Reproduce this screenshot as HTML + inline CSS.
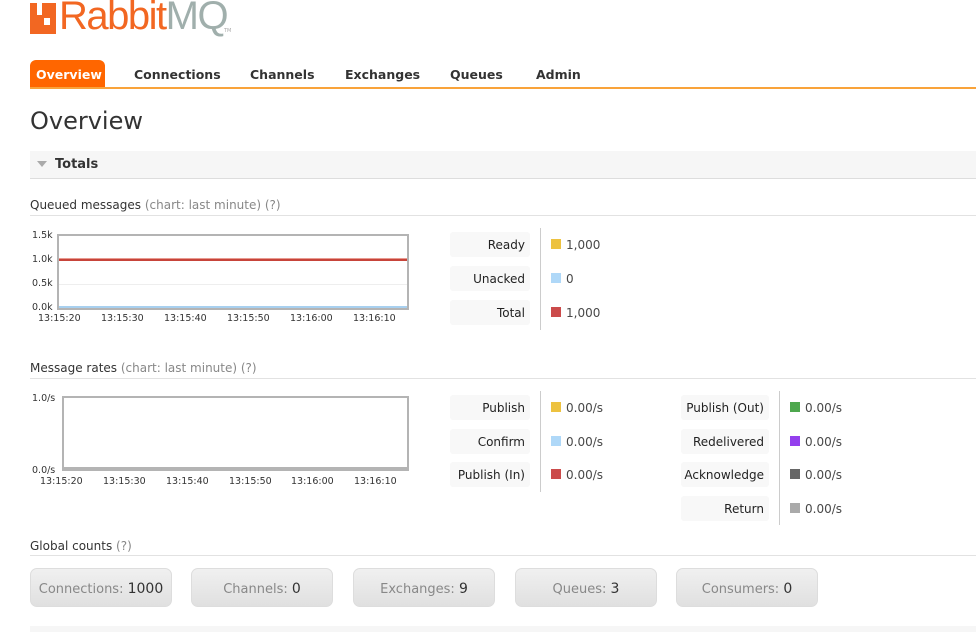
<!DOCTYPE html>
<html><head><style>
*{margin:0;padding:0;box-sizing:border-box}
body{width:976px;height:632px;overflow:hidden;background:#fff;font-family:Verdana,"DejaVu Sans","Liberation Sans",sans-serif;color:#484848;position:relative;font-size:12px}
.a{position:absolute}
.nav{font-weight:bold;font-size:12.5px;color:#333;top:66px}
.lb{position:absolute;width:80px;height:25px;background:#f8f8f8;border-radius:3px;text-align:right;padding-right:5px;line-height:26px;font-size:12px;color:#222}
.sw{position:absolute;width:10px;height:10px}
.v{position:absolute;font-size:12px;color:#484848}
.btn{position:absolute;top:568px;width:142px;height:39px;border-radius:7px;background:linear-gradient(#f0f0f0,#e0e0e0);border:1px solid #ddd;text-align:center;line-height:41px;color:#888;font-size:13px}
.btn b{font-weight:normal;color:#333;font-size:14px}
.hd{font-size:12px;color:#333}
.hd span{color:#888}
.ax{position:absolute;font-size:9.5px;color:#333}
</style></head><body>
<div class="a" style="left:30px;top:3px;width:26px;height:31px;background:#f26722"></div>
<div class="a" style="left:37px;top:3px;width:5px;height:12px;background:#fff"></div>
<div class="a" style="left:44px;top:18px;width:6px;height:7px;background:#fff"></div>
<div class="a" style="left:59px;top:-6px;font-family:'Liberation Sans',sans-serif;font-size:40px;letter-spacing:-1.5px;color:#f26722">Rabbit<span style="color:#a0afac">MQ</span></div>
<div class="a" style="left:224px;top:28px;font-size:5px;color:#aaa">TM</div>
<div class="a" style="left:30px;top:60px;width:75px;height:28px;background:#f60;border-radius:6px 6px 0 0"></div>
<div class="a nav" style="left:36px;color:#fff;top:67px">Overview</div>
<div class="a nav" style="left:134px;top:67px">Connections</div>
<div class="a nav" style="left:250px;top:67px">Channels</div>
<div class="a nav" style="left:345px;top:67px">Exchanges</div>
<div class="a nav" style="left:450px;top:67px">Queues</div>
<div class="a nav" style="left:536px;top:67px">Admin</div>
<div class="a" style="left:30px;top:87px;width:946px;height:2px;background:#f9a33a"></div>
<div class="a" style="left:30px;top:107px;font-size:24px;color:#333">Overview</div>
<div class="a" style="left:30px;top:151px;width:946px;height:28px;background:#f6f6f6;border-bottom:1px solid #ddd"></div>
<div class="a" style="left:37px;top:161px;width:0;height:0;border-left:5px solid transparent;border-right:5px solid transparent;border-top:6px solid #aaa"></div>
<div class="a" style="left:55px;top:157px;font-weight:bold;font-size:13px;color:#333">Totals</div>
<div class="a hd" style="left:30px;top:198px">Queued messages <span>(chart: last minute) (?)</span></div>
<div class="a" style="left:30px;top:215px;width:946px;height:1px;background:#e2e2e2"></div>
<div class="ax" style="left:32px;top:230px">1.5k</div><div class="ax" style="left:32px;top:254px">1.0k</div><div class="ax" style="left:32px;top:278px">0.5k</div><div class="ax" style="left:32px;top:302px">0.0k</div>
<div class="a" style="left:57px;top:234px;width:352px;height:76px;border:2px solid #b4b4b4"></div>
<div class="a" style="left:59px;top:284px;width:348px;height:1px;background:#eee"></div>
<div class="a" style="left:59px;top:258px;width:348px;height:3px;background:#c7443a;border-top:1px solid #e89a90"></div>
<div class="a" style="left:59px;top:306px;width:348px;height:2px;background:#a8d0ef"></div>
<div class="ax" style="left:38px;top:313px">13:15:20</div><div class="ax" style="left:101px;top:313px">13:15:30</div><div class="ax" style="left:164px;top:313px">13:15:40</div><div class="ax" style="left:227px;top:313px">13:15:50</div><div class="ax" style="left:290px;top:313px">13:16:00</div><div class="ax" style="left:353px;top:313px">13:16:10</div>
<div class="lb" style="left:450px;top:232px">Ready</div><div class="lb" style="left:450px;top:266px">Unacked</div><div class="lb" style="left:450px;top:300px">Total</div>
<div class="a" style="left:540px;top:228px;width:1px;height:102px;background:#ccc"></div>
<div class="sw" style="left:551px;top:239px;background:#edc240"></div><div class="v" style="left:566px;top:238px">1,000</div>
<div class="sw" style="left:551px;top:273px;background:#afd8f8"></div><div class="v" style="left:566px;top:272px">0</div>
<div class="sw" style="left:551px;top:307px;background:#cb4b4b"></div><div class="v" style="left:566px;top:306px">1,000</div>
<div class="a hd" style="left:30px;top:361px">Message rates <span>(chart: last minute) (?)</span></div>
<div class="a" style="left:30px;top:378px;width:946px;height:1px;background:#e2e2e2"></div>
<div class="ax" style="left:32px;top:393px">1.0/s</div><div class="ax" style="left:32px;top:465px">0.0/s</div>
<div class="a" style="left:62px;top:396px;width:347px;height:75px;border:2px solid #b4b4b4"></div>
<div class="a" style="left:64px;top:467px;width:343px;height:2px;background:#b4b4b4"></div>
<div class="ax" style="left:40px;top:476px">13:15:20</div><div class="ax" style="left:103px;top:476px">13:15:30</div><div class="ax" style="left:166px;top:476px">13:15:40</div><div class="ax" style="left:229px;top:476px">13:15:50</div><div class="ax" style="left:291px;top:476px">13:16:00</div><div class="ax" style="left:354px;top:476px">13:16:10</div>
<div class="lb" style="left:450px;top:395px">Publish</div><div class="lb" style="left:450px;top:429px">Confirm</div><div class="lb" style="left:450px;top:462px">Publish (In)</div>
<div class="a" style="left:540px;top:391px;width:1px;height:101px;background:#ccc"></div>
<div class="sw" style="left:551px;top:402px;background:#edc240"></div><div class="v" style="left:566px;top:401px">0.00/s</div>
<div class="sw" style="left:551px;top:436px;background:#afd8f8"></div><div class="v" style="left:566px;top:435px">0.00/s</div>
<div class="sw" style="left:551px;top:469px;background:#cb4b4b"></div><div class="v" style="left:566px;top:468px">0.00/s</div>
<div class="lb" style="left:681px;top:395px;width:88px">Publish (Out)</div><div class="lb" style="left:681px;top:429px;width:88px">Redelivered</div><div class="lb" style="left:681px;top:462px;width:88px">Acknowledge</div><div class="lb" style="left:681px;top:496px;width:88px">Return</div>
<div class="a" style="left:779px;top:391px;width:1px;height:134px;background:#ccc"></div>
<div class="sw" style="left:790px;top:402px;background:#4da74d"></div><div class="v" style="left:805px;top:401px">0.00/s</div>
<div class="sw" style="left:790px;top:436px;background:#9440ed"></div><div class="v" style="left:805px;top:435px">0.00/s</div>
<div class="sw" style="left:790px;top:469px;background:#666"></div><div class="v" style="left:805px;top:468px">0.00/s</div>
<div class="sw" style="left:790px;top:503px;background:#aaa"></div><div class="v" style="left:805px;top:502px">0.00/s</div>
<div class="a hd" style="left:30px;top:539px">Global counts <span>(?)</span></div>
<div class="a" style="left:30px;top:555px;width:946px;height:1px;background:#e2e2e2"></div>
<div class="btn" style="left:30px">Connections: <b>1000</b></div>
<div class="btn" style="left:191px">Channels: <b>0</b></div>
<div class="btn" style="left:353px">Exchanges: <b>9</b></div>
<div class="btn" style="left:515px">Queues: <b>3</b></div>
<div class="btn" style="left:676px">Consumers: <b>0</b></div>
<div class="a" style="left:30px;top:626px;width:946px;height:6px;background:#f6f6f6"></div>
</body></html>
